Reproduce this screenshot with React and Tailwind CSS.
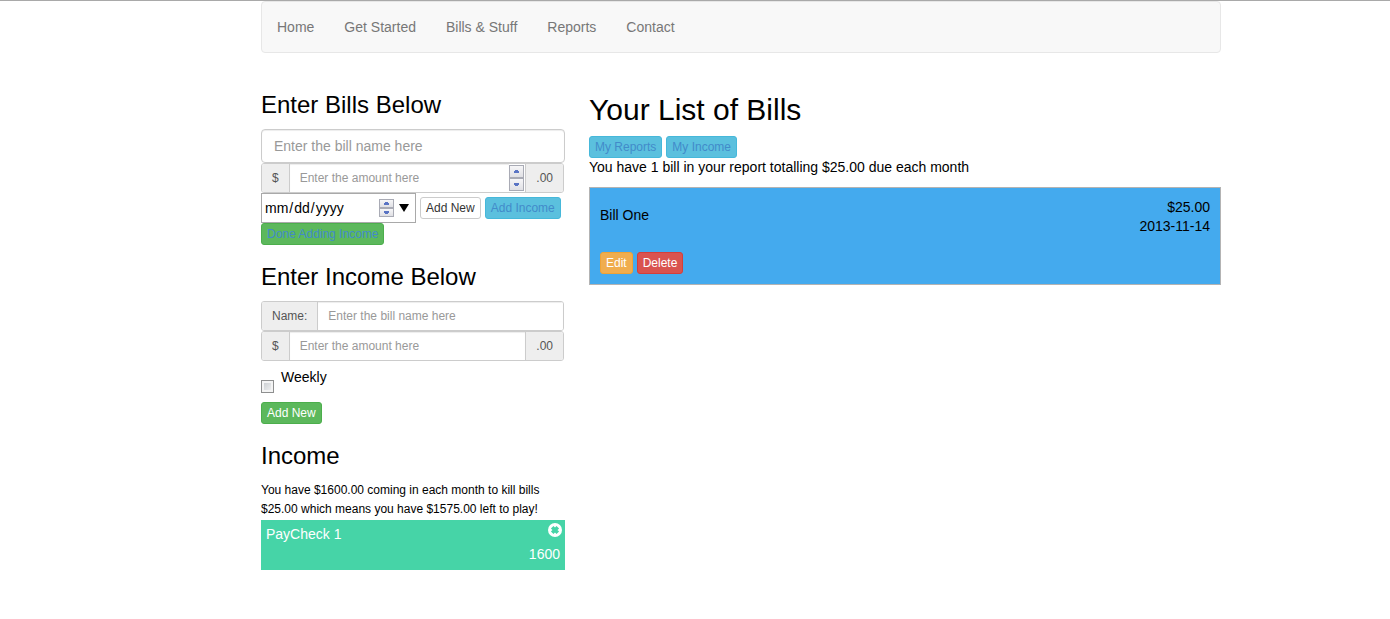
import React from "react";

const sans = "font-['Liberation_Sans',Arial,sans-serif]";
const addon = "flex items-center border-[#ccc] bg-[#eee] px-[10px] text-xs text-[#555]";
const group = "flex h-[30px] w-full overflow-hidden rounded-[3px] border border-[#ccc] bg-white";
const field =
  "min-w-0 flex-1 bg-white px-[10px] text-xs text-[#555] placeholder:text-[#999] outline-none shadow-[inset_0_1px_1px_rgba(0,0,0,0.075)]";

const tones = {
  default: "border-[#ccc] bg-white text-[#333]",
  info: "border-[#46b8da] bg-[#5bc0de] text-[#428bca]",
  done: "border-[#4cae4c] bg-[#5cb85c] text-[#428bca]",
  success: "border-[#4cae4c] bg-[#5cb85c] text-white",
  warning: "border-[#eea236] bg-[#f0ad4e] text-white",
  danger: "border-[#d43f3a] bg-[#d9534f] text-white",
};

function Button({ tone = "default", children }) {
  return (
    <button
      type="button"
      className={`block h-[22px] shrink-0 whitespace-nowrap rounded-[3px] border px-[5px] text-xs leading-5 ${tones[tone]}`}
    >
      {children}
    </button>
  );
}

function StepButton({ down, tall }) {
  return (
    <button
      type="button"
      aria-label={down ? "Decrease" : "Increase"}
      className={`flex w-[15px] items-center justify-center border border-[#a9abb5] bg-linear-to-b from-[#f6f6f8] to-[#e0e0e4] ${
        tall ? "h-[13px]" : "h-[9px]"
      }`}
    >
      <svg width="5" height="3" viewBox="0 0 5 3" shapeRendering="crispEdges" fill="#5a74c4">
        <path d={down ? "M0 0h5v2H4v1H1V2H0z" : "M1 0h3v1h1v2H0V1h1z"} />
      </svg>
    </button>
  );
}

function Stepper({ tall }) {
  return (
    <span className="flex shrink-0 flex-col">
      <StepButton tall={tall} />
      <StepButton down tall={tall} />
    </span>
  );
}

function Navbar() {
  return (
    <nav className="rounded-[4px] border border-[#e7e7e7] bg-[#f8f8f8]">
      <ul className="flex h-[50px] items-center gap-[30px] px-[15px] text-sm text-[#777]">
        {["Home", "Get Started", "Bills & Stuff", "Reports", "Contact"].map((item) => (
          <li key={item}>
            <a href="#">{item}</a>
          </li>
        ))}
      </ul>
    </nav>
  );
}

function BillForm() {
  return (
    <form>
      <h3 className="text-2xl leading-[26px]">Enter Bills Below</h3>
      <input
        type="text"
        aria-label="Bill name"
        placeholder="Enter the bill name here"
        className="mt-[11px] block h-[34px] w-full rounded-[4px] border border-[#ccc] bg-white px-3 text-sm text-[#555] shadow-[inset_0_1px_1px_rgba(0,0,0,0.075)] outline-none placeholder:text-[#999]"
      />
      <div className="pr-px">
        <div className={group}>
          <label htmlFor="bill-amount" className={`${addon} border-r`}>$</label>
          <input
            id="bill-amount"
            type="number"
            placeholder="Enter the amount here"
            className={`${field} [appearance:textfield] [&::-webkit-inner-spin-button]:appearance-none`}
          />
          <span className="flex items-center pr-px">
            <Stepper tall />
          </span>
          <span className={`${addon} border-l`}>.00</span>
        </div>
      </div>
      <div className="flex flex-wrap items-center gap-x-1">
        <div className="flex h-[30px] w-[155px] items-center border border-[#a9a9a9] bg-white pr-[6px]">
          <input
            type="date"
            aria-label="Due date"
            className="min-w-0 flex-1 bg-white pl-[2px] text-sm outline-none [&::-webkit-calendar-picker-indicator]:hidden"
          />
          <Stepper />
          <button type="button" aria-label="Open calendar" className="ml-[5px]">
            <svg width="10" height="8" viewBox="0 0 10 8">
              <path d="M0 0h10L5 8z" />
            </svg>
          </button>
        </div>
        <Button>Add New</Button>
        <Button tone="info">Add Income</Button>
        <Button tone="done">Done Adding Income</Button>
      </div>
    </form>
  );
}

function IncomeForm() {
  return (
    <form className="mt-[19px]">
      <h3 className="text-2xl leading-[26px]">Enter Income Below</h3>
      <div className="mt-[11px] pr-px">
        <div className={group}>
          <label htmlFor="income-name" className={`${addon} border-r`}>Name:</label>
          <input id="income-name" type="text" placeholder="Enter the bill name here" className={field} />
        </div>
        <div className={group}>
          <label htmlFor="income-amount" className={`${addon} border-r`}>$</label>
          <input id="income-amount" type="text" placeholder="Enter the amount here" className={field} />
          <span className={`${addon} border-l`}>.00</span>
        </div>
      </div>
      <div className="mt-[6px] mb-[9px] flex h-[26px] items-start gap-[7px]">
        <input
          id="weekly"
          type="checkbox"
          className="size-[13px] appearance-none self-end border border-[#8e8f8f] bg-linear-to-br from-[#c4c8cc] to-[#f6f6f6] shadow-[inset_0_0_0_2px_#f4f4f4] checked:from-[#428bca] checked:to-[#428bca]"
        />
        <label htmlFor="weekly" className="text-sm leading-5">Weekly</label>
      </div>
      <Button tone="success">Add New</Button>
    </form>
  );
}

function IncomeSummary() {
  return (
    <section className="mt-[19px]">
      <h3 className="text-2xl leading-[26px]">Income</h3>
      <p className="mt-3 text-xs leading-[19px]">
        You have $1600.00 coming in each month to kill bills
        <br />
        $25.00 which means you have $1575.00 left to play!
      </p>
      <div className="mt-px h-[50px] bg-[#46d4a7] px-[5px] pt-1 text-sm leading-5 text-white">
        <div className="flex justify-between">
          <span>PayCheck 1</span>
          <button type="button" aria-label="Remove PayCheck 1" className="-mt-px -mr-[2px] self-start">
            <svg width="14" height="14" viewBox="0 0 14 14">
              <circle cx="7" cy="7" r="7" fill="#fff" />
              <path d="M4.2 4.2l5.6 5.6M9.8 4.2l-5.6 5.6" stroke="#46d4a7" strokeWidth="3.6" />
            </svg>
          </button>
        </div>
        <p className="text-right">1600</p>
      </div>
    </section>
  );
}

function BillList() {
  return (
    <section>
      <h1 className="pt-px text-3xl leading-[33px]">Your List of Bills</h1>
      <div className="mt-[10px] flex gap-1">
        <Button tone="info">My Reports</Button>
        <Button tone="info">My Income</Button>
      </div>
      <p className="text-sm leading-[19px]">
        You have 1 bill in your report totalling $25.00 due each month
      </p>
      <article className="mt-[10px] border border-[#b3b3b3] bg-[#44aaee] p-[10px] text-sm leading-[19px]">
        <div className="flex justify-between">
          <p className="pt-2">Bill One</p>
          <div className="text-right">
            <p>$25.00</p>
            <p>2013-11-14</p>
          </div>
        </div>
        <div className="mt-4 flex gap-1">
          <Button tone="warning">Edit</Button>
          <Button tone="danger">Delete</Button>
        </div>
      </article>
    </section>
  );
}

export default function App() {
  return (
    <div className={`min-h-screen border-t border-[#a9a9a9] bg-white pr-[169px] pb-12 pl-[261px] text-black ${sans}`}>
      <Navbar />
      <main className="mt-[39px] grid grid-cols-[38fr_79fr] gap-6">
        <div>
          <BillForm />
          <IncomeForm />
          <IncomeSummary />
        </div>
        <BillList />
      </main>
    </div>
  );
}
